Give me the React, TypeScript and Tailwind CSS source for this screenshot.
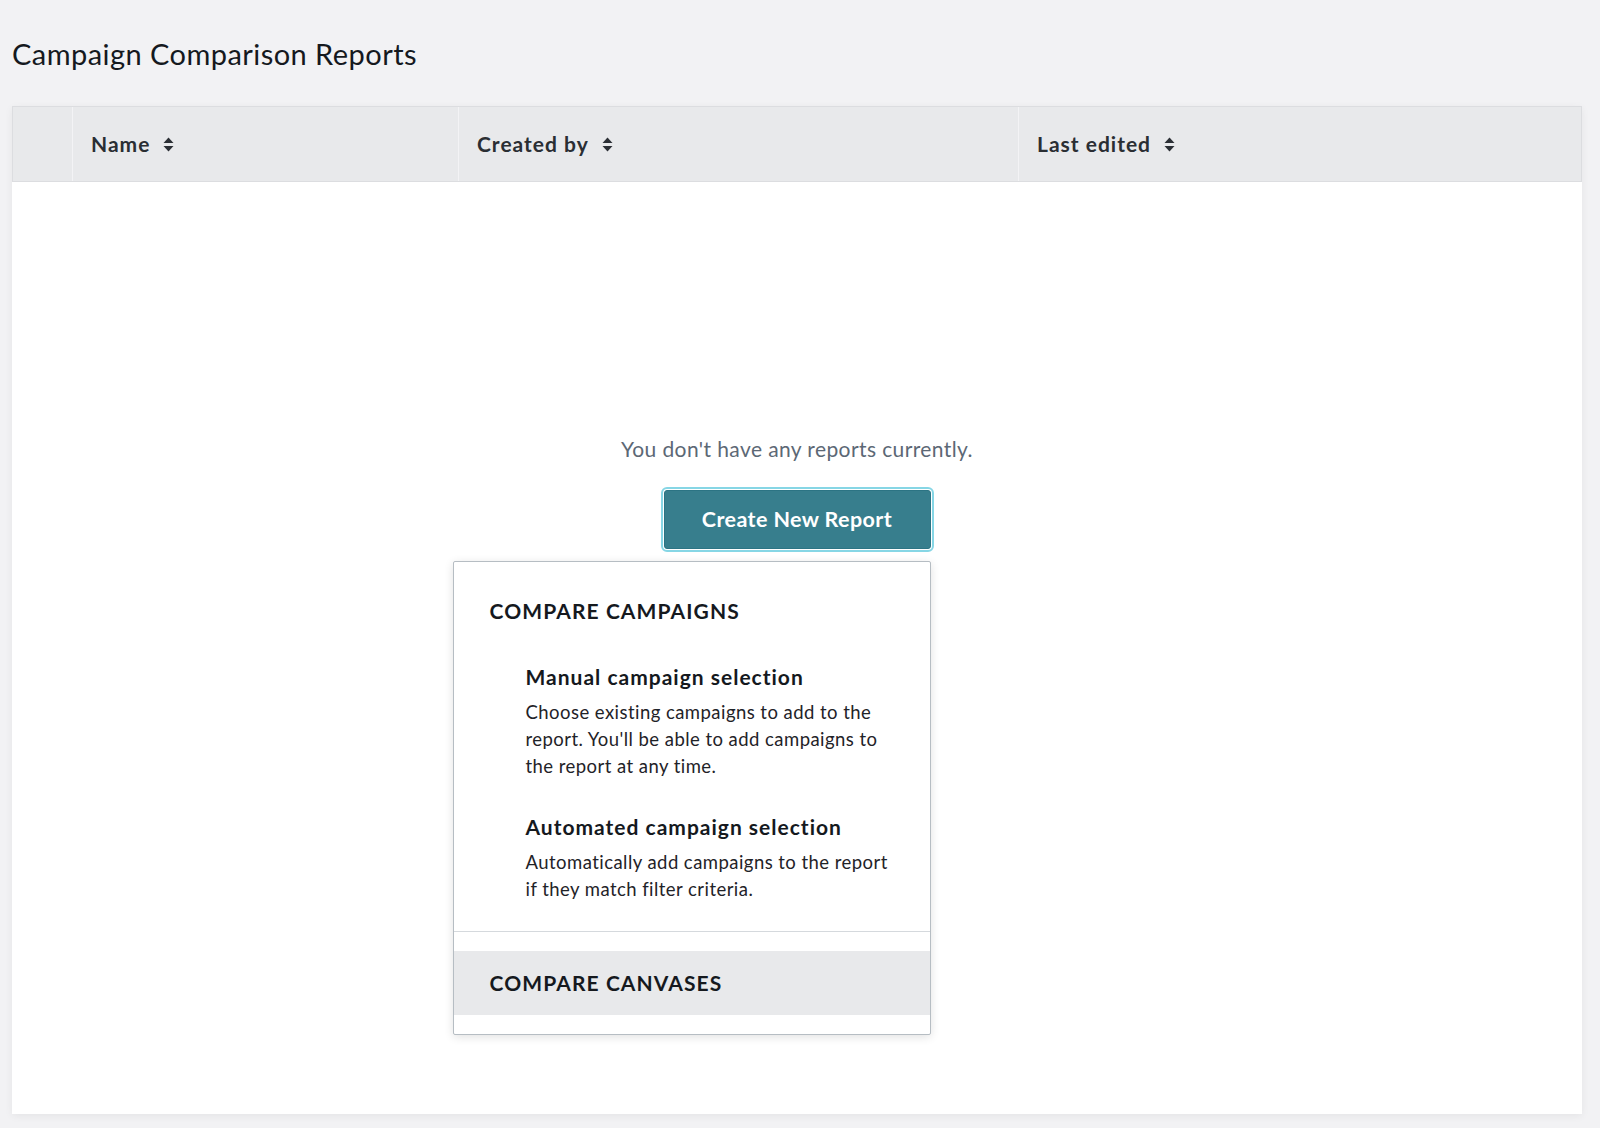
import React from "react";

function SortIcon() {
  return (
    <svg width="11" height="15" viewBox="0 0 11 15" className="ml-[13px] shrink-0">
      <path d="M5.5 0.5 L10.5 6 L0.5 6 Z" fill="#2b2f35" />
      <path d="M0.5 9 L10.5 9 L5.5 14.5 Z" fill="#2b2f35" />
    </svg>
  );
}

function HeaderCell({ label, className }: { label: string; className: string }) {
  return (
    <div className={"flex items-center pl-[18px] border-l border-[#f3f3f5] " + className}>
      <span className="text-[21px] tracking-[1px] font-bold text-[#2a2e33] leading-[28px]">{label}</span>
      <SortIcon />
    </div>
  );
}

export default function App() {
  return (
    <div
      className="min-h-[1128px] bg-[#f2f2f4] pl-[12px] pr-[18px] pb-[14px]"
      style={{ fontFamily: "Lato, 'Noto Sans', sans-serif" }}
    >
      <h1 className="pt-[37px] pb-[35px] text-[29px] tracking-[0.45px] leading-[34px] font-normal text-[#15191e]">
        Campaign Comparison Reports
      </h1>
      <div className="bg-white h-[1008px] flex flex-col shadow-[0_2px_8px_rgba(0,0,0,0.06)]">
        <div className="h-[76px] flex bg-[#e8e9eb] border border-[#dcdde0]">
          <div className="w-[59px]" />
          <HeaderCell label="Name" className="w-[386px]" />
          <HeaderCell label="Created by" className="w-[560px]" />
          <HeaderCell label="Last edited" className="flex-1" />
        </div>
        <div className="flex flex-col items-center pt-[253px]">
          <p className="text-[21px] tracking-[0.4px] leading-[28px] text-[#5c6875]">
            You don&apos;t have any reports currently.
          </p>
          <div className="relative mt-[27px]">
            <button className="w-[267px] h-[59px] bg-[#377e8d] border border-[#2c7484] rounded-[3px] text-white text-[21.5px] tracking-[0.4px] font-bold outline-2 outline-solid outline-offset-1 outline-[#86d6e5]">
              Create New Report
            </button>
            <div className="absolute right-0 top-full mt-[12px] w-[478px] bg-white border border-[#b6bdc3] rounded-[2px] shadow-[0_2px_10px_rgba(0,0,0,0.12)] text-[#15191e]">
              <div className="pt-[35px] px-[36px] pb-[28px]">
                <div className="text-[21px] leading-[28px] font-bold tracking-[1.1px]">COMPARE CAMPAIGNS</div>
                <div className="pl-[36px] mt-[38px]">
                  <div className="text-[21px] tracking-[1px] leading-[28px] font-bold">Manual campaign selection</div>
                  <div className="mt-[8px] text-[18.5px] tracking-[0.45px] leading-[27px] text-[#1f2328]">
                    Choose existing campaigns to add to the
                    <br />
                    report. You&apos;ll be able to add campaigns to
                    <br />
                    the report at any time.
                  </div>
                  <div className="mt-[33px] text-[21px] tracking-[1px] leading-[28px] font-bold">Automated campaign selection</div>
                  <div className="mt-[8px] text-[18.5px] tracking-[0.45px] leading-[27px] text-[#1f2328]">
                    Automatically add campaigns to the report
                    <br />
                    if they match filter criteria.
                  </div>
                </div>
              </div>
              <div className="border-t border-[#d5d9dd] pt-[19px] pb-[19px]">
                <div className="h-[64px] bg-[#e8e9eb] flex items-center px-[36px]">
                  <span className="text-[21px] leading-[28px] font-bold tracking-[1.1px]">COMPARE CANVASES</span>
                </div>
              </div>
            </div>
          </div>
        </div>
      </div>
    </div>
  );
}
